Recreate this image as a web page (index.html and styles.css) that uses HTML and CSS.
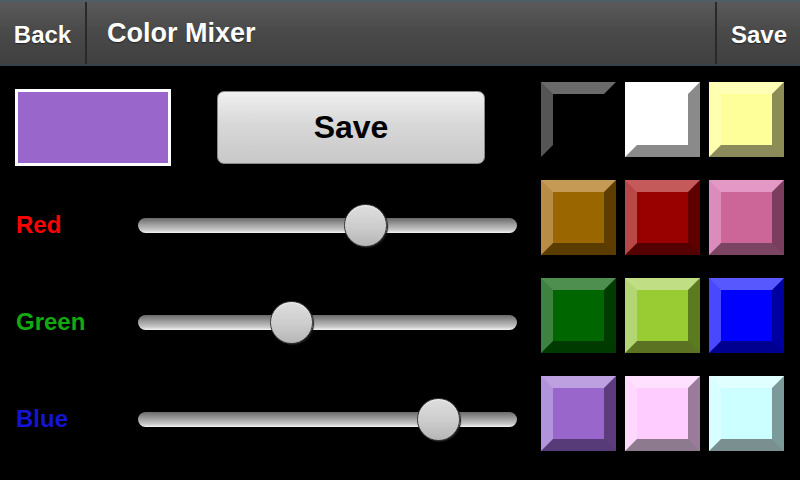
FILE: index.html
```html
<!DOCTYPE html>
<html>
<head>
<meta charset="utf-8">
<link rel="stylesheet" href="styles.css">
</head>
<body>
<div class="app">
  <header class="topbar">
    <div class="hbtn back">Back</div>
    <div class="title">Color Mixer</div>
    <div class="hbtn save">Save</div>
  </header>
  <main class="main">
    <section class="left">
      <div class="toprow">
        <div class="preview"></div>
        <button class="savebtn">Save</button>
      </div>
      <div class="srow">
        <div class="label red">Red</div>
        <div class="slider"><div class="track"></div><div class="thumb" style="left: 59.9%"></div></div>
      </div>
      <div class="srow">
        <div class="label green">Green</div>
        <div class="slider"><div class="track"></div><div class="thumb" style="left: 40.4%"></div></div>
      </div>
      <div class="srow">
        <div class="label blue">Blue</div>
        <div class="slider"><div class="track"></div><div class="thumb" style="left: 79.2%"></div></div>
      </div>
    </section>
    <section class="swatches">
      <div class="sw c-black"></div>
      <div class="sw c-white"></div>
      <div class="sw c-yellow"></div>
      <div class="sw c-brown"></div>
      <div class="sw c-red"></div>
      <div class="sw c-pink"></div>
      <div class="sw c-green"></div>
      <div class="sw c-lime"></div>
      <div class="sw c-blue"></div>
      <div class="sw c-purple"></div>
      <div class="sw c-lpink"></div>
      <div class="sw c-cyan"></div>
    </section>
  </main>
</div>
</body>
</html>
```

FILE: styles.css
```css
* { box-sizing: border-box; }
html, body { margin: 0; padding: 0; background: #000; }
body { width: 800px; height: 480px; overflow: hidden; font-family: "Liberation Sans", Arial, sans-serif; }

.topbar {
  height: 66px;
  display: flex;
  align-items: stretch;
  background: linear-gradient(#5a5a5a, #4a4a4a 45%, #404040);
  border-top: 2px solid #4f5d66;
  border-bottom: 2px solid #34434b;
}
.hbtn {
  display: flex;
  align-items: center;
  justify-content: center;
  color: #fff;
  font-weight: bold;
  font-size: 24px;
  text-shadow: 0 1px 1px rgba(0,0,0,0.5);
}
.back { width: 87px; border-right: 2px solid #262a2c; padding-top: 4px; }
.save { width: 85px; border-left: 2px solid #262a2c; padding-top: 4px; padding-left: 1px; }
.title {
  flex: 1;
  display: flex;
  align-items: center;
  padding-left: 20px;
  color: #fff;
  font-weight: bold;
  font-size: 27px;
  padding-top: 1px;
  text-shadow: 0 1px 1px rgba(0,0,0,0.5);
}

.main { display: flex; height: 414px; }
.left { width: 530px; display: flex; flex-direction: column; padding-left: 15px; }
.toprow { display: flex; align-items: flex-start; padding-top: 23px; height: 111px; }
.preview {
  width: 156px; height: 77px;
  background: #9966cc;
  border: 3px solid #fff;
}
.savebtn {
  margin-left: 46px;
  margin-top: 2px;
  width: 268px; height: 73px;
  border: 1px solid #8a8a8a;
  border-radius: 7px;
  background: linear-gradient(#f0f0f0, #d8d8d8 45%, #c8c8c8);
  font-family: "Liberation Sans", Arial, sans-serif;
  font-weight: bold;
  font-size: 32px;
  color: #000;
  padding: 0;
}

.srow { height: 97px; display: flex; align-items: center; }
.label { width: 123px; font-weight: bold; font-size: 24px; padding-bottom: 2px; padding-left: 1px; }
.red { color: #ff0000; }
.green { color: #11aa11; }
.blue { color: #1414d2; }
.slider { position: relative; width: 379px; height: 44px; display: flex; align-items: center; }
.track {
  width: 100%; height: 15px;
  border-radius: 8px;
  background: linear-gradient(#6a6a6a, #9a9a9a 40%, #c8c8c8 80%, #f4f4f4);
}
.thumb {
  position: absolute;
  top: 0;
  width: 43px; height: 43px;
  margin-left: -21px;
  border-radius: 50%;
  background: linear-gradient(#dedede, #cccccc 55%, #b6b6b6);
  border: 1px solid #3a3a3a;
  box-shadow: 1px 1px 1px #1a1a1a, inset 0 1px 1px rgba(255,255,255,0.6);
}

.swatches {
  padding-top: 16px;
  padding-left: 11px;
  display: grid;
  grid-template-columns: repeat(3, 75px);
  grid-auto-rows: 75px;
  column-gap: 9px;
  row-gap: 23px;
  align-content: start;
}
.sw { border: 12px solid; }
.c-black  { background: #000;    border-color: #6a6a6a #000 #000 #555; }
.c-white  { background: #fff;    border-color: #fff #8a8a8a #8a8a8a #fff; }
.c-yellow { background: #ffff99; border-color: #ffffb8 #8c8c55 #8a8a5a #ffffb0; }
.c-brown  { background: #996600; border-color: #c49a55 #5e3e00 #5a3c00 #b88c45; }
.c-red    { background: #990000; border-color: #c45a5a #5e0000 #550000 #b84848; }
.c-pink   { background: #cc6699; border-color: #e498c6 #7a3d5e #7a4462 #dc8cbc; }
.c-green  { background: #006600; border-color: #4e8e4e #003c00 #003a00 #3f823f; }
.c-lime   { background: #99cc33; border-color: #c0de84 #5c7a1e #5a7222 #b4d672; }
.c-blue   { background: #0000ff; border-color: #5858ff #0000a0 #000090 #4848ff; }
.c-purple { background: #9966cc; border-color: #bca0e0 #5c3c7c #573a78 #b294da; }
.c-lpink  { background: #ffccff; border-color: #ffe0ff #9a7c9a #8e7a8e #ffd8ff; }
.c-cyan   { background: #ccffff; border-color: #e0ffff #7c9a9a #7a9090 #d8ffff; }
```
